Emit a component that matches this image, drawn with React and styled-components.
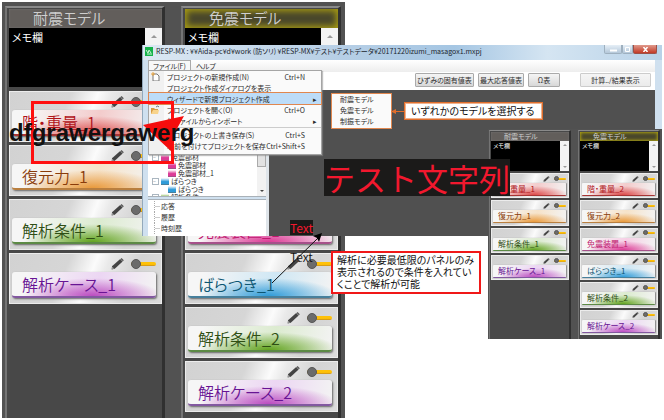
import React from "react";
import styled, { createGlobalStyle, css } from "styled-components";

const Global = createGlobalStyle`
  * { box-sizing: border-box; }
  body { margin: 0; background: #fff; }
  body, button, input, textarea {
    font-family: "Noto Sans CJK JP", "Noto Sans", sans-serif;
    font-feature-settings: "palt";
  }
  button { margin: 0; padding: 0; border: 0; background: none; color: inherit; text-align: left; white-space: nowrap; }
`;

const HUES = {
  red: { edge: "#a83434", glow: "#dc4a4a", ink: "#b01218", wash: "#f3cccc" },
  orange: { edge: "#b97f3f", glow: "#e99a3c", ink: "#8a3c0a", wash: "#f6e3c9" },
  green: { edge: "#5c8a45", glow: "#62a31f", ink: "#2f4f14", wash: "#dcebd0" },
  pink: { edge: "#a6508a", glow: "#dc3c96", ink: "#c01a70", wash: "#f6cfe5" },
  blue: { edge: "#47809c", glow: "#2f9bd8", ink: "#0c5672", wash: "#cfe7f4" },
  purple: { edge: "#8258a0", glow: "#bb4cc0", ink: "#681494", wash: "#ecd6f3" },
};

const Scene = styled.main`
  position: relative;
  min-height: 420px;
  padding: 2px;
  overflow: hidden;
`;

const Board = styled.section`
  display: grid;
  background: #525252;
  ${(p) =>
    p.$small
      ? css`
          position: absolute;
          z-index: 2;
          top: 129px;
          right: 2px;
          width: 174px;
          grid-template-columns: 82px 82px;
          gap: 7px;
          padding: 1px 1px 0;
        `
      : css`
          width: 343px;
          grid-template-columns: 160px 160px;
          gap: 16px;
          padding: 4px 4px 0 3px;
        `}
`;

const Column = styled.div`
  background: #484848;
  border-style: solid;
  border-color: #8a8a8a #303030 #484848 #747474;
  border-width: ${(p) => (p.$small ? "1px 2px 0 1px" : "2px 3px 0 2px")};
  padding: ${(p) => (p.$small ? "1px 0 4px 1px" : "1px 0 6px 2px")};
`;

const ColumnTitle = styled.h2`
  margin: 0;
  color: #cfcfcf;
  font-weight: ${(p) => (p.$small ? 400 : 350)};
  text-align: left;
  background: ${(p) => (p.$active ? "#49472b" : "#625e5b")};
  box-shadow: ${(p) =>
    p.$active
      ? `inset 0 0 ${p.$small ? 3 : 6}px ${p.$small ? 1 : 2}px #a89c12`
      : "inset 0 0 2px #777"};
  height: ${(p) => (p.$small ? 9 : 19)}px;
  line-height: ${(p) => (p.$small ? 9 : 18)}px;
  font-size: ${(p) => (p.$small ? 7 : 15)}px;
  padding-left: ${(p) => (p.$small ? 13 : 24)}px;
`;

const Memo = styled.div`
  display: flex;
  height: ${(p) => (p.$small ? 30 : 59)}px;
  margin-bottom: ${(p) => (p.$small ? 2 : 4)}px;
  background: #000;
`;

const MemoText = styled.textarea`
  flex: 1;
  min-width: 0;
  border: 0;
  resize: none;
  overflow: hidden;
  background: #000;
  color: #fff;
  padding: ${(p) => (p.$small ? "1px 2px" : "2px 3px")};
  font-size: ${(p) => (p.$small ? 6 : 11)}px;
  line-height: ${(p) => (p.$small ? 8 : 14)}px;
`;

const MemoScroll = styled.div`
  display: flex;
  flex-direction: column;
  justify-content: space-between;
  align-items: center;
  background: #f3f3f3;
  width: ${(p) => (p.$small ? 9 : 17)}px;
  padding: ${(p) => (p.$small ? 3 : 7)}px 0;
  &::before, &::after {
    content: "";
    border: ${(p) => (p.$small ? 2 : 3)}px solid transparent;
  }
  &::before { border-top: 0; border-bottom-color: #999; }
  &::after { border-bottom: 0; border-top-color: #999; }
`;

const Cards = styled.div`
  display: grid;
  ${(p) =>
    p.$small
      ? css`height: 162px; grid-template-rows: repeat(6, 1fr); gap: 2px;`
      : css`grid-auto-rows: 51px; gap: 3px;`}
`;

const CardBox = styled.article`
  background: linear-gradient(112deg, #d2d2d2 0%, #d6d6d6 36%, #fbfbfb 52%, #e9e9e9 60%, #d4d4d4 78%, #dcdcdc 100%);
  border: 1px solid #ececec;
  min-height: 0;
  padding: ${(p) => (p.$small ? "0 2px 0 1px" : "1px 5px 0 2px")};
`;

const CardTools = styled.div`
  display: flex;
  justify-content: flex-end;
  align-items: center;
  height: ${(p) => (p.$small ? 9 : 17)}px;
  gap: ${(p) => (p.$small ? 4 : 7)}px;
`;

const PencilButton = styled.button`
  display: flex;
  svg { width: ${(p) => (p.$small ? 7 : 13)}px; height: ${(p) => (p.$small ? 6 : 12)}px; }
`;

const Slider = styled.input`
  appearance: none;
  margin: 0;
  background: none;
  width: ${(p) => (p.$small ? 12 : 25)}px;
  height: ${(p) => (p.$small ? 6 : 11)}px;
  &::-webkit-slider-runnable-track {
    height: ${(p) => (p.$small ? 2 : 4)}px;
    border-radius: 2px;
    background: linear-gradient(#ffc107 60%, #c68c1c);
  }
  &::-webkit-slider-thumb {
    appearance: none;
    width: ${(p) => (p.$small ? 5 : 10)}px;
    height: ${(p) => (p.$small ? 5 : 10)}px;
    margin-top: ${(p) => (p.$small ? -2 : -3)}px;
    border-radius: 50%;
    background: #6b6b6b;
    border: 1px solid #575757;
  }
`;

const CardButton = styled.button`
  display: block;
  width: 100%;
  font-weight: ${(p) => (p.$small ? 400 : 350)};
  color: ${(p) => HUES[p.$hue].ink};
  background:
    radial-gradient(ellipse 48% 75% at 56% 100%, ${(p) => HUES[p.$hue].glow}, transparent),
    linear-gradient(100deg, #f6f6f6 10%, ${(p) => HUES[p.$hue].wash} 60%, #f3f3f3 100%);
  height: ${(p) => (p.$small ? 13 : 26)}px;
  line-height: ${(p) => (p.$small ? 12 : 24)}px;
  font-size: ${(p) => (p.$small ? 8 : 16)}px;
  padding-left: ${(p) => (p.$small ? 5 : 10)}px;
  border-radius: ${(p) => (p.$small ? 1 : 3)}px;
  border-bottom: ${(p) => (p.$small ? 1 : 2)}px solid ${(p) => HUES[p.$hue].edge};
  box-shadow: ${(p) => (p.$small ? "1px 0 1px #888" : "1px 1px 2px #666")};
`;

const Pencil = () => (
  <svg viewBox="0 0 13 12" aria-hidden="true">
    <path d="M1 8.2 9.2 1.1 11.6 3.5 3.8 10.8 0.6 11.6Z" fill="#444" />
    <path d="M9.5.9 10.6.1 12.8 2.3 11.9 3.3Z" fill="#555" />
    <path d="M1.1 8.8 3.2 10.6 1.1 11Z" fill="#aaa" />
  </svg>
);

const COLUMNS = [
  {
    title: "耐震モデル",
    cards: [["階・重量_1", "red"], ["復元力_1", "orange"], ["解析条件_1", "green"], ["解析ケース_1", "purple"]],
  },
  {
    title: "免震モデル",
    active: true,
    cards: [
      ["階・重量_2", "red"], ["復元力_2", "orange"], ["免震装置_1", "pink"],
      ["ばらつき_1", "blue"], ["解析条件_2", "green"], ["解析ケース_2", "purple"],
    ],
  },
];

function ModelBoard({ small }) {
  return (
    <Board $small={small}>
      {COLUMNS.map((c) => (
        <Column key={c.title} $small={small}>
          <ColumnTitle $small={small} $active={c.active}>{c.title}</ColumnTitle>
          <Memo $small={small}>
            <MemoText $small={small} aria-label={`${c.title} メモ`} defaultValue="メモ欄" />
            <MemoScroll $small={small} />
          </Memo>
          <Cards $small={small}>
            {c.cards.map(([label, hue]) => (
              <CardBox key={label} $small={small}>
                <CardTools $small={small}>
                  <PencilButton $small={small} aria-label={`${label} 編集`}><Pencil /></PencilButton>
                  <Slider $small={small} type="range" defaultValue={0} aria-label={label} />
                </CardTools>
                <CardButton $small={small} $hue={hue}>{label}</CardButton>
              </CardBox>
            ))}
          </Cards>
        </Column>
      ))}
    </Board>
  );
}

const AppWindow = styled.section`
  position: absolute;
  z-index: 1;
  top: 45px;
  left: 142px;
  right: 2px;
  height: 191px;
  display: flex;
  flex-direction: column;
  border-left: 1px solid #93a9bb;
  background: #cfe0ef;
  color: #2c2c2c;
  font-size: 7px;
  button { font-size: 7px; }
`;

const TitleBar = styled.header`
  display: flex;
  align-items: flex-start;
  height: 15px;
  padding-right: 5px;
  background: linear-gradient(90deg, #dce8f3 0, #b9d0e6 35%, #a5c6e3 60%, #d5e5f2 78%, #b8d2e8 100%);
`;

const AppLogo = styled.svg`
  width: 8px;
  height: 9px;
  margin: 2px 3px 0 2px;
`;

const WindowTitle = styled.h1`
  flex: 1;
  margin: 0;
  font-size: 7px;
  line-height: 12px;
  font-weight: 400;
  white-space: nowrap;
  color: #1c262e;
`;

const Caption = styled.button`
  width: ${(p) => p.$w}px;
  height: 9px;
  border: 1px solid ${(p) => (p.$close ? "#9d5047" : "#9eb0bf")};
  border-top: 0;
  border-radius: 0 0 2px 2px;
  background: ${(p) => (p.$close ? "linear-gradient(#e09a8c, #c23a26)" : "linear-gradient(#e6eff7, #b4c8da)")};
  display: flex;
  align-items: center;
  justify-content: center;
  svg { width: 7px; height: 5px; }
`;

const MenuBar = styled.nav`
  display: flex;
  height: 12px;
  margin: 0 7px 0 5px;
  background: linear-gradient(#fff, #ededed);
`;

const MenuTab = styled.button`
  line-height: 9px;
  padding: 0 4px;
  border: ${(p) => (p.$open ? "1px solid #aaa" : "1px solid transparent")};
  border-bottom: 0;
  background: ${(p) => (p.$open ? "#f8f8f8" : "none")};
`;

const ToolBar = styled.div`
  display: flex;
  justify-content: flex-end;
  align-items: flex-start;
  gap: 4px;
  height: 18px;
  margin: 0 7px 0 5px;
  padding: 1px 4px 0;
  background: #fff;
`;

const ToolButton = styled.button`
  height: 14px;
  line-height: 11px;
  text-align: center;
  border: 1px solid ${(p) => (p.$wide ? "#ccc" : "#aaa")};
  border-radius: 1px;
  background: linear-gradient(#f5f5f5, ${(p) => (p.$wide ? "#ebebeb" : "#d8d8d8")});
  width: ${(p) => p.$w}px;
  margin-left: ${(p) => (p.$wide ? 16 : 0)}px;
`;

const Body = styled.div`
  flex: 1;
  display: flex;
  min-height: 0;
  margin: 0 7px 0 5px;
`;

const Side = styled.div`
  width: 118px;
  display: flex;
  flex-direction: column;
  justify-content: flex-end;
`;

const TreePanel = styled.div`
  display: flex;
  height: 45px;
  overflow: hidden;
  align-items: flex-end;
  background: #fff;
  border-bottom: 1px solid #a9b1b8;
`;

const Tree = styled.ul`
  list-style: none;
  flex: 1;
  margin: 0;
  height: 45px;
  padding: 2px 0 0 4px;
`;

const TreeItem = styled.li`
  display: flex;
  align-items: center;
  gap: 2px;
  height: 8px;
  line-height: 8px;
  padding-left: ${(p) => (p.$level ? 14 : 0)}px;
  white-space: nowrap;
  &::before {
    content: "${(p) => (p.$level ? "" : "−")}";
    width: ${(p) => (p.$level ? 0 : 5)}px;
    height: 5px;
    line-height: 3px;
    border: ${(p) => (p.$level ? "0" : "1px solid #aab6c0")};
    color: #678;
    font-size: 5px;
  }
`;

const Swatch = styled.span`
  width: 8px;
  height: 7px;
  background: linear-gradient(#fff8, ${(p) => HUES[p.$hue].glow} 60%);
  border-bottom: 1px solid ${(p) => HUES[p.$hue].edge};
`;

const TreeScroll = styled.div`
  width: 9px;
  height: 43px;
  background: #f2f2f2;
  display: flex;
  flex-direction: column;
  justify-content: space-between;
  align-items: center;
  padding-bottom: 4px;
  &::before { content: ""; width: 7px; height: 12px; border: 1px solid #aaa; background: #e2e2e2; }
  &::after { content: ""; border: 2px solid transparent; border-top-color: #444; border-bottom: 0; }
`;

const ResultList = styled.ul`
  list-style: none;
  margin: 2px 0 0;
  padding: 1px 0 0 6px;
  height: 37px;
  background: #fff;
  border-top: 1px solid #a9b1b8;
  li {
    display: flex;
    align-items: center;
    gap: 1px;
    height: 11px;
    line-height: 11px;
  }
  li::before { content: ""; width: 5px; height: 11px; border-left: 1px dotted #aaa; background: linear-gradient(#ccc, #ccc) 0 5px / 5px 1px no-repeat; }
`;

const Canvas = styled.div`
  flex: 1;
  background: #505050;
  border-left: 3px solid #dfe5ea;
`;

const Dropdown = styled.div`
  position: absolute;
  z-index: 1;
  top: 25px;
  left: 5px;
  width: 174px;
  padding: 0 0 3px;
  background: linear-gradient(90deg, #f1f1f1 15px, #fafafa 15px);
  border: 1px solid #a5a5a5;
  box-shadow: 1px 1px 1px #8888;
`;

const MenuItem = styled.button`
  display: flex;
  align-items: center;
  width: 100%;
  height: 11px;
  padding: 0 ${(p) => (p.$arrow ? 4 : 16)}px 0 2px;
  line-height: 10px;
  background: ${(p) => (p.$selected ? "#bcdcf8" : "none")};
  outline: ${(p) => (p.$selected ? "1px solid #e0874f" : "0")};
`;

const ItemIcon = styled.svg`
  width: 9px;
  height: 9px;
  margin-right: 7px;
`;

const ItemLabel = styled.span`
  flex: 1;
`;

const Rule = styled.hr`
  margin: 1px 0 1px 16px;
  border: 0;
  border-top: 1px solid #ccc;
`;

const Submenu = styled.div`
  position: absolute;
  z-index: 1;
  top: 48px;
  left: 188px;
  width: 61px;
  padding: 0 0 1px 8px;
  background: #fafafa;
  border: 1px solid #e0874f;
  button { display: block; line-height: 11px; height: 11px; }
`;

const Note = styled.p`
  position: absolute;
  z-index: 3;
  margin: 0;
  background: #fff;
  color: #111;
  font-weight: 400;
  font-size: 10px;
  white-space: pre;
`;

const ChooseNote = styled(Note)`
  left: 404px;
  top: 102px;
  border: 1px solid #e06e2c;
  outline: 1px solid #e06e2c88;
  outline-offset: -2px;
  line-height: 16px;
  padding: 0 8px 0 6px;
`;

const PanelNote = styled(Note)`
  left: 331px;
  top: 251px;
  border: 2px solid #f01818;
  line-height: 12px;
  padding: 1px 5px 2px 4px;
`;

const Overlay = styled.svg`
  position: absolute;
  z-index: 4;
  left: 0;
  top: 0;
  width: 664px;
  height: 420px;
  pointer-events: none;
`;

const Stamp = styled.span`
  position: absolute;
  z-index: 5;
  white-space: nowrap;
  font-feature-settings: normal;
`;

const LatinStamp = styled(Stamp)`
  left: 9px;
  top: 119px;
  color: #111;
  font: 700 24px/28px "Liberation Sans", Arial, sans-serif;
`;

const BigStamp = styled(Stamp)`
  left: 324px;
  top: 159px;
  background: #1b1a19;
  color: #f2182e;
  font-weight: 400;
  font-size: 31px;
  line-height: 37px;
`;

const SmallStamp = styled(Stamp)`
  left: 290px;
  top: ${(p) => (p.$red ? 220 : 249)}px;
  font-size: 12px;
  font-weight: ${(p) => (p.$red ? 400 : 350)};
  line-height: 15px;
  color: ${(p) => (p.$red ? "#f2182e" : "#111")};
  background: ${(p) => (p.$red ? "#1b1a19" : "none")};
`;

const NewIcon = () => (
  <>
    <path d="M2 2h4l2 2v5H2z" fill="#fff" stroke="#777" />
    <path d="M2 0v4M0 2h4" stroke="#e8a440" />
  </>
);
const OpenIcon = () => (
  <>
    <path d="M0 3h3l1 1h3v5H0z" fill="#d69a43" />
    <path d="M2 5h6L7 9H0z" fill="#f8d48b" />
    <path d="M5 2q2-2 3 0" stroke="#678" fill="none" />
  </>
);

const ITEMS = [
  { label: "プロジェクトの新規作成(N)", key: "Ctrl+N", icon: <NewIcon /> },
  { label: "プロジェクト作成ダイアログを表示" },
  { label: "ウィザードで新規プロジェクト作成", key: "▸", arrow: true, selected: true },
  { label: "プロジェクトを開く(O)", key: "Ctrl+O", icon: <OpenIcon /> },
  { label: "他ファイルからインポート", key: "▸", arrow: true },
  null,
  { label: "プロジェクトの上書き保存(S)", key: "Ctrl+S" },
  { label: "名前を付けてプロジェクトを保存", key: "Ctrl+Shift+S" },
];

const TREE = [
  ["免震部材", "pink", 0], ["免震部材", "pink", 1], ["免震部材_1", "pink", 1],
  ["ばらつき", "blue", 0], ["ばらつき", "blue", 1], ["解析条件", "green", 0],
];

export default function App() {
  return (
    <Scene>
      <Global />
      <ModelBoard />
      <AppWindow>
        <TitleBar>
          <AppLogo viewBox="0 0 8 9" aria-hidden="true">
            <rect width="8" height="9" fill="#16b34a" />
            <path d="M1 3 3 6 4 3 6 6M2 7h5" stroke="#c9f5d4" fill="none" />
          </AppLogo>
          <WindowTitle>RESP-MX : ¥¥Aida-pc¥d¥work (防ソリ) ¥RESP-MX¥テスト¥テストデータ¥20171220izumi_masagox1.mxpj</WindowTitle>
          <Caption $w={18} aria-label="最小化"><svg viewBox="0 0 7 5"><path d="M0 3.5h7" stroke="#fff" strokeWidth="2" /></svg></Caption>
          <Caption $w={11} aria-label="最大化"><svg viewBox="0 0 7 5"><path d="M1.5.5h4v4h-4z" stroke="#fff" fill="none" /></svg></Caption>
          <Caption $w={24} $close aria-label="閉じる"><svg viewBox="0 0 7 5"><path d="M1.5 0 5.5 5M5.5 0 1.5 5" stroke="#fff" strokeWidth="1.5" /></svg></Caption>
        </TitleBar>
        <MenuBar>
          <MenuTab $open>ファイル(F)</MenuTab>
          <MenuTab>ヘルプ</MenuTab>
        </MenuBar>
        <ToolBar>
          <ToolButton $w={59}>ひずみの固有値表</ToolButton>
          <ToolButton $w={46}>最大応答値表</ToolButton>
          <ToolButton $w={32}>Ω表</ToolButton>
          <ToolButton $w={71} $wide>計算../結果表示</ToolButton>
        </ToolBar>
        <Body>
          <Side>
            <TreePanel>
              <Tree>
                {TREE.map(([label, hue, level], i) => (
                  <TreeItem key={i} $level={level}><Swatch $hue={hue} />{label}</TreeItem>
                ))}
              </Tree>
              <TreeScroll />
            </TreePanel>
            <ResultList>
              <li>応答</li>
              <li>履歴</li>
              <li>時刻歴</li>
            </ResultList>
          </Side>
          <Canvas />
        </Body>
        <Dropdown>
          {ITEMS.map((it, i) =>
            it ? (
              <MenuItem key={i} $selected={it.selected} $arrow={it.arrow}>
                <ItemIcon viewBox="0 0 9 9" aria-hidden="true">{it.icon}</ItemIcon>
                <ItemLabel>{it.label}</ItemLabel>
                <span>{it.key}</span>
              </MenuItem>
            ) : (
              <Rule key={i} />
            )
          )}
        </Dropdown>
        <Submenu>
          <button>耐震モデル</button>
          <button>免震モデル</button>
          <button>制振モデル</button>
        </Submenu>
      </AppWindow>
      <ModelBoard small />
      <ChooseNote>いずれかのモデルを選択する</ChooseNote>
      <PanelNote>{"解析に必要最低限のパネルのみ\n表示されるので条件を入れてい\nくことで解析が可能"}</PanelNote>
      <Overlay viewBox="0 0 664 420" aria-hidden="true">
        <path d="M404 111.5H394" stroke="#e06e2c" />
        <path d="M391 111.5 396 109V114Z" fill="#e06e2c" />
        <rect x="32.5" y="102.5" width="140" height="60" fill="none" stroke="#ff1010" strokeWidth="3" />
        <path d="M184 116 143 125 172 152 174 134Z" fill="#f50d0d" />
        <path d="M272 283 318 238" stroke="#111" />
        <path d="M322 233 319 242 317 238 313 236Z" fill="#000" />
      </Overlay>
      <LatinStamp>dfgrawergawerg</LatinStamp>
      <BigStamp>テスト文字列</BigStamp>
      <SmallStamp $red>Text</SmallStamp>
      <SmallStamp>Text</SmallStamp>
    </Scene>
  );
}
